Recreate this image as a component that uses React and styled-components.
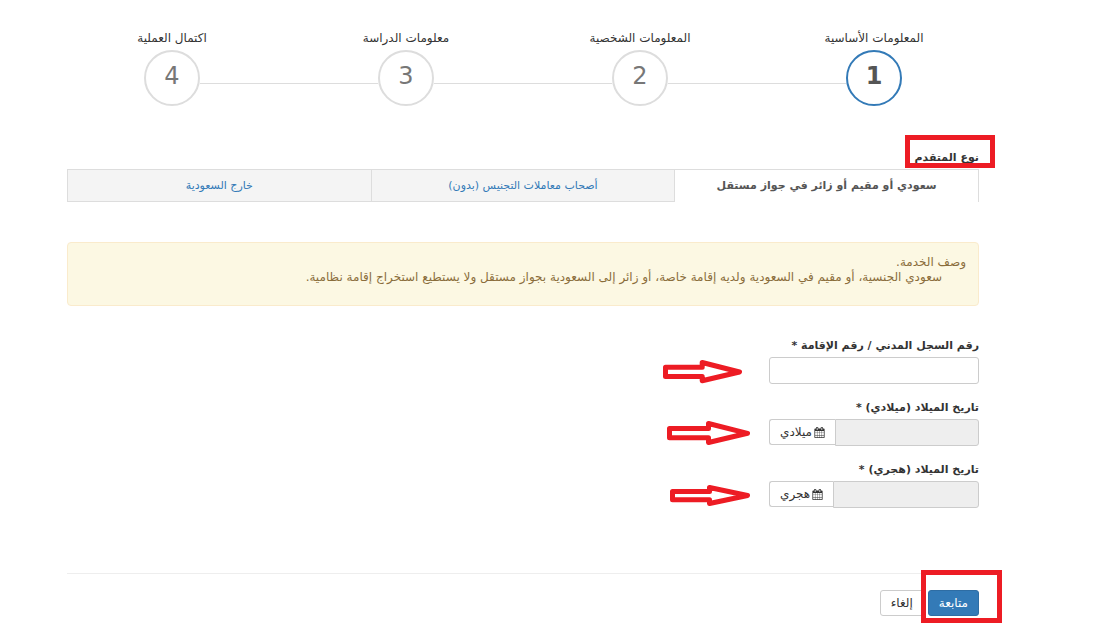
import React from 'react'
import styled, { createGlobalStyle } from 'styled-components'

const steps = ['المعلومات الأساسية', 'المعلومات الشخصية', 'معلومات الدراسة', 'اكتمال العملية']

const tabs = [
    'سعودي أو مقيم أو زائر في جواز مستقل',
    'أصحاب معاملات التجنيس (بدون)',
    'خارج السعودية',
]

function CalendarIcon() {
    return (
        <Calendar viewBox='0 0 1792 1792' aria-hidden='true'>
            <path d='M192 1664h288v-288h-288v288zm352 0h320v-288h-320v288zm-352-352h288v-320h-288v320zm352 0h320v-320h-320v320zm-352-384h288v-288h-288v288zm736 736h320v-288h-320v288zm-384-736h320v-288h-320v288zm768 736h288v-288h-288v288zm-384-352h320v-320h-320v320zm-352-864v-288q0-13-9.5-22.5t-22.5-9.5h-64q-13 0-22.5 9.5t-9.5 22.5v288q0 13 9.5 22.5t22.5 9.5h64q13 0 22.5-9.5t9.5-22.5zm736 864h288v-320h-288v320zm-384-384h320v-288h-320v288zm384 0h288v-288h-288v288zm32-480v-288q0-13-9.5-22.5t-22.5-9.5h-64q-13 0-22.5 9.5t-9.5 22.5v288q0 13 9.5 22.5t22.5 9.5h64q13 0 22.5-9.5t9.5-22.5zm384-64v1280q0 52-38 90t-90 38h-1408q-52 0-90-38t-38-90v-1280q0-52 38-90t90-38h128v-96q0-66 47-113t113-47h64q66 0 113 47t47 113v96h384v-96q0-66 47-113t113-47h64q66 0 113 47t47 113v96h128q52 0 90 38t38 90z' />
        </Calendar>
    )
}

function Stepper() {
    return (
        <Steps>
            {steps.map((label, i) => (
                <Step key={label}>
                    <StepLabel>{label}</StepLabel>
                    <StepTrack>
                        <StepLine $hidden={i === 0} />
                        <StepCircle $active={i === 0}>{i + 1}</StepCircle>
                        <StepLine $hidden={i === steps.length - 1} />
                    </StepTrack>
                </Step>
            ))}
        </Steps>
    )
}

function App() {
    return (
        <Page dir='rtl' lang='ar'>
            <GlobalStyle />
            <Stepper />
            <TypeRow>
                <TypeTitle>نوع المتقدم</TypeTitle>
                <TitleFrame />
            </TypeRow>
            <Tabs>
                {tabs.map((tab, i) => (
                    <Tab key={tab} href='#' $active={i === 0}>{tab}</Tab>
                ))}
            </Tabs>
            <Notice>
                <NoticeText>وصف الخدمة.</NoticeText>
                <NoticeDetail>
                    سعودي الجنسية، أو مقيم في السعودية ولديه إقامة خاصة، أو زائر إلى السعودية بجواز مستقل ولا يستطيع استخراج إقامة نظامية.
                </NoticeDetail>
            </Notice>
            <Fields>
                <Field>
                    <Label htmlFor='civil-id'>رقم السجل المدني / رقم الإقامة *</Label>
                    <InputGroup>
                        <Input id='civil-id' type='text' />
                    </InputGroup>
                    <Arrow $gap='27px' width='79' height='25' viewBox='0 0 79 25'>
                        <path d='M2.5 8.2H39.2V3.5L76.5 13L39.2 21.8V17.5H2.5Z' />
                    </Arrow>
                </Field>
                <Field>
                    <Label htmlFor='birth-gregorian'>تاريخ الميلاد (ميلادي) *</Label>
                    <InputGroup>
                        <Input id='birth-gregorian' type='text' readOnly $joined />
                        <PickButton type='button'><CalendarIcon />ميلادي</PickButton>
                    </InputGroup>
                    <Arrow $gap='19px' width='83' height='25' viewBox='0 0 83 25'>
                        <path d='M2.5 7.4H41.5V2.5L80.5 12.3L41.5 21.5V16.7H2.5Z' />
                    </Arrow>
                </Field>
                <Field>
                    <Label htmlFor='birth-hijri'>تاريخ الميلاد (هجري) *</Label>
                    <InputGroup>
                        <Input id='birth-hijri' type='text' readOnly $joined />
                        <PickButton type='button'><CalendarIcon />هجري</PickButton>
                    </InputGroup>
                    <Arrow $gap='19px' width='80' height='23' viewBox='0 0 80 23'>
                        <path d='M2.5 6.4H39.5V2.5L77.5 10.5L39.5 18.5V14.7H2.5Z' />
                    </Arrow>
                </Field>
            </Fields>
            <Actions>
                <Button type='button' $primary>متابعة</Button>
                <Button type='button'>إلغاء</Button>
                <ActionFrame />
            </Actions>
        </Page>
    )
}

export default App

const GlobalStyle = createGlobalStyle`
*{
box-sizing:border-box;
}
body{
margin:0;
background:#fff;
color:#333;
font-family:"DejaVu Sans","Noto Sans",sans-serif;
font-size:12px;
line-height:15px;
}
button,input{
font-family:inherit;
font-size:inherit;
line-height:inherit;
}
`
const Page = styled.main`
padding:31px 115px 16px 67px;
`
const Steps = styled.div`
display:flex;
margin:0 -12px;
`
const Step = styled.div`
flex:1;
text-align:center;
`
const StepLabel = styled.div`
height:19px;
`
const StepTrack = styled.div`
display:flex;
align-items:flex-start;
`
const StepLine = styled.div`
flex:1;
height:1px;
margin-top:33px;
background:${props => props.$hidden ? 'transparent' : '#ddd'};
`
const StepCircle = styled.div`
width:56px;
height:56px;
display:flex;
align-items:center;
justify-content:center;
padding-bottom:4px;
border:2px solid ${props => props.$active ? '#337ab7' : '#ddd'};
border-radius:50%;
color:${props => props.$active ? '#555' : '#777'};
font-size:24px;
font-weight:${props => props.$active ? 700 : 400};
`
const TypeRow = styled.div`
position:relative;
margin-top:44px;
height:19px;
`
const TypeTitle = styled.h2`
margin:0;
font-size:11px;
font-weight:700;
`
const Frame = styled.div`
position:absolute;
border:5px solid #ed1c24;
pointer-events:none;
`
const TitleFrame = styled(Frame)`
top:-15px;
right:-16px;
width:90px;
height:33px;
`
const Tabs = styled.nav`
display:flex;
border-right:1px solid #ddd;
font-size:11px;
`
const Tab = styled.a`
flex:1;
padding:8px 10px;
border:1px solid #ddd;
border-right:0;
border-left-width:${props => props.$active ? '0' : '1px'};
border-bottom-color:${props => props.$active ? '#fff' : '#ddd'};
background:${props => props.$active ? '#fff' : '#f4f4f4'};
color:${props => props.$active ? '#555' : '#337ab7'};
font-weight:${props => props.$active ? 700 : 400};
text-align:center;
text-decoration:none;
white-space:nowrap;
&:nth-child(2){
border-right:1px solid #ddd;
}
`
const Notice = styled.section`
margin-top:40px;
padding:12px 12px 20px;
border:1px solid #faebcc;
border-radius:4px;
background:#fcf8e3;
color:#8a6d3b;
`
const NoticeText = styled.p`
margin:0;
`
const NoticeDetail = styled(NoticeText)`
padding-right:24px;
`
const Fields = styled.form`
display:flex;
flex-direction:column;
align-items:flex-start;
gap:16px;
margin-top:32px;
`
const Field = styled.div`
position:relative;
width:210px;
`
const Label = styled.label`
display:block;
margin-bottom:4px;
font-size:11px;
font-weight:700;
white-space:nowrap;
`
const InputGroup = styled.div`
display:flex;
align-items:flex-start;
`
const Input = styled.input`
flex:1;
min-width:0;
height:27px;
padding:4px 10px;
border:1px solid #ccc;
border-radius:${props => props.$joined ? '0 3px 3px 0' : '3px'};
background:${props => props.$joined ? '#eee' : '#fff'};
color:#555;
`
const Button = styled.button`
height:26px;
padding:0 10px;
border:1px solid ${props => props.$primary ? '#2e6da4' : '#ccc'};
border-radius:3px;
background:${props => props.$primary ? '#337ab7' : '#fff'};
color:${props => props.$primary ? '#fff' : '#333'};
white-space:nowrap;
`
const PickButton = styled(Button)`
display:flex;
align-items:center;
gap:2px;
border-right:0;
border-radius:3px 0 0 3px;
`
const Calendar = styled.svg`
width:11px;
height:11px;
fill:currentColor;
`
const Arrow = styled.svg`
position:absolute;
right:calc(100% + ${props => props.$gap});
bottom:0;
fill:none;
stroke:#ed1c24;
stroke-width:5;
stroke-linejoin:round;
`
const Actions = styled.footer`
position:relative;
display:flex;
gap:4px;
margin-top:65px;
padding-top:16px;
border-top:1px solid #eee;
`
const ActionFrame = styled(Frame)`
top:-4px;
right:-23px;
width:81px;
height:53px;
`
